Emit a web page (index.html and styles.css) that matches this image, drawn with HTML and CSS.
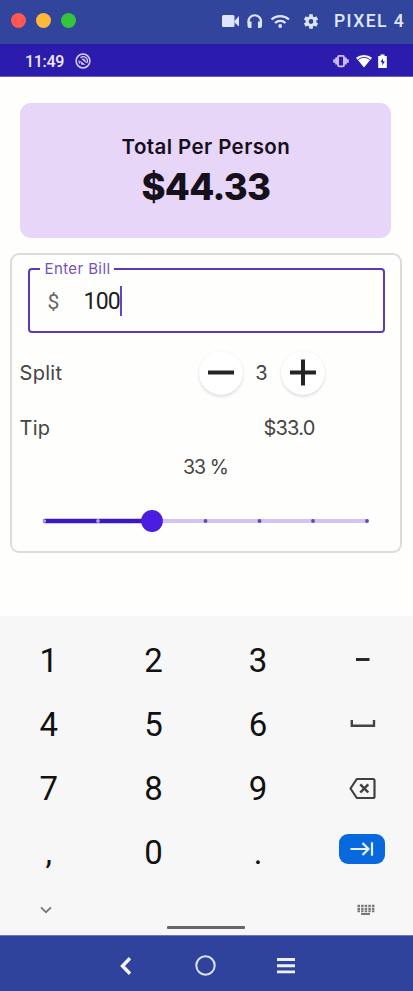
FILE: index.html
```html
<!DOCTYPE html>
<html lang="en">
<head>
<meta charset="utf-8">
<title>Tip calculator</title>
<link rel="stylesheet" href="styles.css">
</head>
<body>
<div class="device">
  <header class="titlebar">
    <div class="lights"><i class="light red"></i><i class="light amber"></i><i class="light green"></i></div>
    <div class="tools">
      <svg width="95" height="20" viewBox="0 0 95 20" fill="none" stroke="#dfe5ff">
        <rect x="0" y="4" width="12.500" height="12" rx="1.500" fill="#dfe5ff" stroke="none"/>
        <path d="M12.500 10 L17 5V15.500L12.500 11.500Z" fill="#dfe5ff" stroke="none"/>
        <path d="M26.500 12V10.500a6.200 6.200 0 0 1 12.500 0V12" stroke-width="2.200"/>
        <path d="M25.500 10.500h4v6.500h-1.800q-2.200 0-2.200-2zM40 10.500h-4v6.500h1.800q2.200 0 2.200-2z" fill="#dfe5ff" stroke="none"/>
        <path d="M49.500 8.500a13 13 0 0 1 17.500 0M53 12a7.500 7.500 0 0 1 10.500 0" stroke-width="2.200"/>
        <circle cx="58.200" cy="15" r="1.900" fill="#dfe5ff" stroke="none"/>
        <circle cx="89" cy="10.500" r="3.900" stroke-width="3"/>
        <path d="M89 3.300v3M89 14.700v3M82.800 6.900l2.600 1.500M92.600 12.600l2.600 1.500M82.800 14.100l2.600-1.500M92.600 8.400l2.600-1.500" stroke-width="3.600"/>
      </svg>
      <span class="model">PIXEL 4</span>
    </div>
  </header>

  <div class="statusbar">
    <span class="clock">11:49</span>
    <svg class="dnd" width="16" height="16" viewBox="0 0 16 16" fill="none" stroke="#d9ceff">
      <circle cx="8" cy="8" r="6.900" stroke-width="1.500"/>
      <path d="M4.700 10.500a4 4 0 0 1-.6-3M5.500 4.700a4.200 4.200 0 0 1 6.200 5.500" stroke-width="1.300"/>
      <path d="M6.300 5.800a3.500 3.500 0 0 1 4.500 4.200zM4.800 7.500l5.700 4.200H6.500z" fill="#d9ceff" stroke="none"/>
    </svg>
    <svg class="signals" width="56" height="16" viewBox="0 0 56 16">
      <rect x="5" y="2.900" width="6" height="10.500" rx="1.300" fill="none" stroke="#d3bdfa" stroke-width="1.900"/>
      <path d="M3.200 4.500v7M12.800 4.500v7M1.200 6.300v3.400M14.800 6.300v3.400" stroke="#d3bdfa" stroke-width="1.900"/>
      <path d="M23 4.800a12.500 12.500 0 0 1 16 0L31 14.600z" fill="#fff"/>
      <path d="M25 6.600a10 10 0 0 1 12 0" fill="none" stroke="#2c1cad" stroke-width=".9"/>
      <path d="M45.200 3h2.300V1.400h4V3h2.300v12h-8.600z" fill="#fff"/>
      <path d="M50 5.200l-2.600 4h1.900v3.200l2.600-4.200h-1.900z" fill="#2c1cad"/>
    </svg>
  </div>

  <main class="app">
    <section class="total">
      <div class="total-label">Total Per Person</div>
      <div class="total-value">$44.33</div>
    </section>

    <section class="card">
      <div class="field">
        <span class="field-label">Enter Bill</span>
        <span class="currency">$</span>
        <span class="amount">100</span><i class="caret"></i>
      </div>
      <div class="row split">
        <span class="name">Split</span>
        <div class="stepper">
          <button class="round" aria-label="Fewer"><svg width="28" height="28"><path d="M1 13.500H27" stroke="#242424" stroke-width="4"/></svg></button>
          <span class="count">3</span>
          <button class="round" aria-label="More"><svg width="28" height="28"><path d="M1 13.500H27M14 .5V26.500" stroke="#242424" stroke-width="4"/></svg></button>
        </div>
      </div>
      <div class="row tip">
        <span class="name">Tip</span>
        <span class="tip-value">$33.0</span>
      </div>
      <div class="percent">33 %</div>
      <svg class="slider" width="330" height="24" viewBox="0 0 330 24">
        <path d="M4 12H326" stroke="#d1c4f5" stroke-width="4" stroke-linecap="round"/>
        <path d="M4 12H110" stroke="#3e18bd" stroke-width="4.500" stroke-linecap="round"/>
        <g fill="#b6a1ec"><circle cx="3.500" cy="12" r="1.700"/><circle cx="57" cy="12" r="1.900"/></g>
        <g fill="#6248b5"><circle cx="164.500" cy="12" r="1.900"/><circle cx="218.500" cy="12" r="1.900"/><circle cx="272" cy="12" r="1.900"/><circle cx="326" cy="12" r="1.900"/></g>
        <circle cx="111" cy="12" r="10.900" fill="#4a1de0"/>
      </svg>
    </section>
  </main>

  <section class="keyboard">
    <div class="keys">
      <span class="key">1</span><span class="key">2</span><span class="key">3</span>
      <span class="key"><svg width="26" height="26"><path d="M6 11.500H19.500" stroke="#222" stroke-width="2.900"/></svg></span>
      <span class="key">4</span><span class="key">5</span><span class="key">6</span>
      <span class="key"><svg width="26" height="26"><path d="M1.800 8V13.700H24V8" fill="none" stroke="#444" stroke-width="2.400"/></svg></span>
      <span class="key">7</span><span class="key">8</span><span class="key">9</span>
      <span class="key"><svg width="28" height="26" fill="none" stroke="#404040"><path d="M7.800 3H24Q25.500 3 25.500 4.500V20.500Q25.500 22 24 22H7.800L1.500 12.500Z" stroke-width="2.200" stroke-linejoin="round"/><path d="M11.300 8.300L19.300 16.500M19.300 8.300L11.300 16.500" stroke-width="2.500"/></svg></span>
      <span class="key">,</span><span class="key">0</span><span class="key">.</span>
      <span class="key"><span class="next"><svg width="26" height="18" fill="none" stroke="#e6f0ff" stroke-width="2.200"><path d="M1.500 9H18M13.500 3L19.500 9L13.500 15M23 2.300V15.700"/></svg></span></span>
    </div>
    <div class="keyboard-foot">
      <svg width="14" height="10" fill="none" stroke="#777" stroke-width="1.800"><path d="M2 2.300L7 7.200L12 2.300"/></svg>
      <svg width="18" height="12" fill="none" stroke="#777"><path d="M.5 2H17.500M.5 5.300H17.500" stroke-width="2.500" stroke-dasharray="2.500 1.100"/><path d="M.5 7.500H17.500" stroke-width="1.500" stroke-dasharray="2.500 1.100"/><path d="M4 10H13" stroke-width="2"/></svg>
    </div>
    <div class="handle"></div>
  </section>

  <nav class="navbar">
    <svg width="12" height="18" fill="none" stroke="#f4f6ff" stroke-width="3.400"><path d="M10 1.200L2.500 9L10 16.800"/></svg>
    <svg width="22" height="22" fill="none" stroke="#dce4ff" stroke-width="2"><circle cx="11.500" cy="10.500" r="9.200"/></svg>
    <svg width="18" height="18" stroke="#edf1ff" stroke-width="2.900"><path d="M0 2.500H18M0 8.700H18M0 14.900H18"/></svg>
  </nav>
</div>
</body>
</html>
```
FILE: styles.css
```css
* { box-sizing: border-box; }
body { margin: 0; background: #fefefd; font-family: Inter, "Open Sans", sans-serif; }
svg { display: block; flex: none; }
.device { width: 413px; height: 991px; display: flex; flex-direction: column; overflow: hidden; }

.titlebar { height: 44px; flex: none; background: #30459b; display: flex; align-items: center; justify-content: space-between; padding: 0 8px 3px 11px; }
.lights { display: flex; gap: 10px; }
.light { width: 15px; height: 15px; border-radius: 50%; }
.red { background: #ff5852; }
.amber { background: #ffb83a; }
.green { background: #36c43c; }
.tools { display: flex; align-items: center; gap: 17px; }
.tools svg { overflow: visible; }
.model { font: 500 17.500px/20px Roboto, sans-serif; letter-spacing: 1.450px; color: #e1e7ff; width: 71px; white-space: nowrap; }

.statusbar { height: 33px; flex: none; background: #2c1cad; border-bottom: 1px solid #6b61b5; display: flex; align-items: center; padding: 2px 24px 0 25px; }
.clock { font: 500 16px/18px Roboto, sans-serif; letter-spacing: -.3px; color: #eeeaff; width: 39px; padding-top: 2px; }
.dnd { margin-left: 11px; }
.signals { margin-left: auto; margin-right: 0; }

.app { height: 539px; flex: none; padding: 25.500px 11px 0 10px; }
.total { height: 135px; margin: 0 0 0 10.400px; width: 371px; border-radius: 11px; background: #e7d6f8; display: flex; flex-direction: column; align-items: center; padding-top: 31px; color: #15101a; }
.total-label { font-size: 20.500px; line-height: 26px; font-weight: 600; letter-spacing: .4px; white-space: nowrap; }
.total-value { font-size: 36.500px; line-height: 54px; font-weight: 800; letter-spacing: -.7px; white-space: nowrap; }

.card { height: 300px; margin: 15.500px 0 0 -.5px; width: 392px; border: 2px solid #dcdcdc; border-radius: 9px; }
.field { position: relative; height: 65px; width: 357px; margin: 13px 0 0 16px; border: 2.500px solid #5e38b8; border-radius: 4px; display: flex; align-items: center; padding: 3px 0 0 18px; }
.field-label { position: absolute; top: -10px; left: 10px; padding: 0 4px 0 5px; background: #fefefd; color: #7650bd; font-size: 15px; line-height: 18px; letter-spacing: .4px; white-space: nowrap; }
.currency { width: 36px; color: #666; font: 21px/28px Roboto, sans-serif; }
.amount { font: 23px/30px Roboto, sans-serif; color: #202020; letter-spacing: -.8px; }
.caret { width: 2.500px; height: 30px; background: #6642c6; margin-bottom: 3px; }
.row { display: flex; align-items: center; padding-left: 8px; color: #444; font-size: 20px; }
.split { height: 44px; margin-top: 18px; }
.name { width: 179px; letter-spacing: .3px; }
.stepper { display: flex; align-items: center; }
.round { width: 44px; height: 44px; border: 0; border-radius: 50%; background: #fff; box-shadow: 0 2px 3px #0000001c, 0 0 2px #0001; display: flex; align-items: center; justify-content: center; padding: 0; }
.count { width: 38px; text-align: center; }
.tip { height: 30px; margin-top: 18px; }
.tip-value { margin-left: 65px; white-space: nowrap; letter-spacing: -.8px; }
.percent { height: 30px; margin-top: 9px; line-height: 30px; text-align: center; font-size: 19.500px; letter-spacing: -.9px; color: #444; }
.slider { margin: 26.500px 0 0 29.500px; }

.keyboard { height: 319px; flex: none; background: #f7f7f7; padding-top: 12px; overflow: hidden; }
.keys { height: 257px; margin: 0 -2px 0 -3.500px; display: grid; grid-template: repeat(4, 1fr) / repeat(4, 1fr); }
.key { display: flex; align-items: center; justify-content: center; font: 33px/40px Roboto, sans-serif; color: #111; padding-top: 1px; }
.next { width: 46px; height: 30px; border-radius: 9px; background: #0868de; display: flex; align-items: center; justify-content: center; margin: 0 1px 9px 0; }
.keyboard-foot { height: 40px; display: flex; justify-content: space-between; align-items: center; padding: 9px 38px 0 39px; }
.handle { width: 78px; height: 3px; border-radius: 1px; background: #666; margin: 1px auto 0; position: relative; left: -1px; }

.navbar { height: 56px; flex: none; background: #2f439c; border-top: 1px solid #6478bf; display: flex; align-items: center; padding: 5px 118px 0 120px; justify-content: space-between; }
```
